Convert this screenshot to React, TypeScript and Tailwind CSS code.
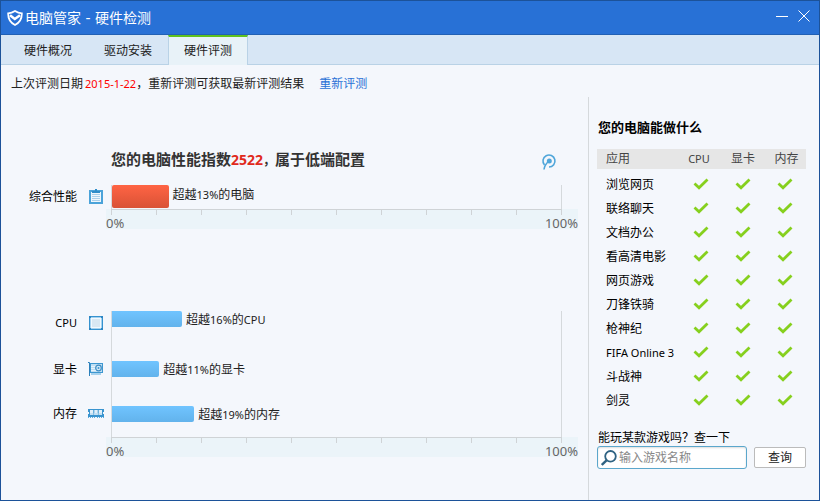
import React from "react";

type Metric = {
  name: string;
  icon: React.ReactNode;
  share: number;
  before: string;
  percent: string;
  after: string;
  latin?: string;
  labelClass: string;
  barClass: string;
};

const games = [
  "浏览网页",
  "联络聊天",
  "文档办公",
  "看高清电影",
  "网页游戏",
  "刀锋铁骑",
  "枪神纪",
  "FIFA Online 3",
  "斗战神",
  "剑灵",
];

const tabs = ["硬件概况", "驱动安装", "硬件评测"];

function ShieldLogo() {
  return (
    <svg viewBox="0 0 16 16" className="w-4 h-4" fill="none" stroke="#fff">
      <path d="M8 1C6 2.300 3.600 3.200 1.200 3.400C1 8.500 3 12.600 8 15C13 12.600 15 8.500 14.800 3.400C12.400 3.200 10 2.300 8 1Z" strokeWidth="1.800" />
      <path d="M3 5.300L7.800 9L13 5.300" strokeWidth="2.600" />
    </svg>
  );
}

function ClipboardIcon() {
  return (
    <svg viewBox="0 0 16 16" className="w-4 h-4" fill="none">
      <rect x="1" y="2" width="14" height="14" fill="#4ba3d9" />
      <rect x="3" y="4" width="10" height="10" fill="#eef6fc" />
      <path d="M4 3h8v2H4z" fill="#2f8dc9" />
      <path d="M7 1h2v2H7z" fill="#2f8dc9" />
      <path d="M4 6.500h8M4 8.500h8M4 10.500h8M4 12.500h8" stroke="#a9d0ea" />
    </svg>
  );
}

function ChipIcon() {
  return (
    <svg viewBox="0 0 16 16" className="w-4 h-4" fill="none">
      <rect x="1.500" y="1.500" width="13" height="13" fill="#a5d2f0" stroke="#3592cf" />
      <rect x="3.500" y="3.500" width="9" height="9" fill="#d9e8f3" stroke="#f2f9fe" />
      <path d="M1 1h2v2H1zM13 1h2v2h-2zM1 13h2v2H1zM13 13h2v2h-2z" fill="#2c86c4" />
    </svg>
  );
}

function GraphicsIcon() {
  return (
    <svg viewBox="0 0 16 16" className="w-4 h-4" fill="none">
      <path d="M0 1.500h1.500V15" stroke="#2c80bb" />
      <rect x="2.500" y="2.500" width="12" height="9" fill="#c0def2" stroke="#3d97d0" />
      <path d="M3 5.500h5M3 7.500h4M3 9.500h5" stroke="#e6f3fb" />
      <path d="M2 11.500h13" stroke="#3d97d0" />
      <circle cx="10.500" cy="7" r="2.800" fill="#d3e9f7" stroke="#3d8cc3" strokeWidth="1.200" />
      <circle cx="10.500" cy="7" r="1" fill="#3d97d0" />
      <path d="M3 13h10" stroke="#8cc4e8" strokeWidth="1.500" />
    </svg>
  );
}

function MemoryIcon() {
  return (
    <svg viewBox="0 0 16 16" className="w-4 h-4" fill="none">
      <path d="M0 4h16v3h-1v2h1v3H0V9h1V7H0z" fill="#3994cf" />
      <path d="M2 5h3.300v5H2zM6.300 5h3.400v5H6.300zM10.700 5H14v5h-3.300z" fill="#e1f0fa" />
      <path d="M2 8h3.300v2H2zM6.300 8h3.400v2H6.300zM10.700 8H14v2h-3.300z" fill="#c4e0f3" />
      <path d="M0 12.500h7M9 12.500h7" stroke="#5eacdd" strokeDasharray="1 1" />
    </svg>
  );
}

function SpeedIcon() {
  return (
    <svg viewBox="0 0 16 18" className="w-4 h-[18px]" fill="none" stroke="#4fa6da">
      <path d="M3.500 12A6 6 0 1 1 8 14" strokeWidth="1.600" />
      <circle cx="8.300" cy="8" r="2.500" fill="#4fa6da" stroke="none" />
      <path d="M8 8C5.500 10 3.500 12.500 3 16.500" strokeWidth="1.600" />
    </svg>
  );
}

function Check() {
  return (
    <svg viewBox="0 0 16 12" className="mx-auto w-4 h-3" fill="none" role="img" aria-label="支持">
      <path d="M1.500 5.500L6 9.700L14.500 1.500" stroke="#86d01e" strokeWidth="2.800" />
    </svg>
  );
}

function Chart({ metrics, overall }: { metrics: Metric[]; overall?: boolean }) {
  return (
    <div>
      <div className="flex">
        <div className="w-[110px] pr-[7px]">
          {metrics.map((m) => (
            <div key={m.name} className={`flex h-4 items-center justify-end gap-[11px] ${m.labelClass}`}>
              <span className={m.name === "CPU" ? "text-[11px]" : "pt-px"}>{m.name}</span>
              {m.icon}
            </div>
          ))}
        </div>
        <div className={`mr-[26px] flex-1 border-x border-[#d5d9dc] ${overall ? "pb-px" : "pb-[15px]"}`}>
          {metrics.map((m) => (
            <div key={m.name} className={`flex items-center gap-1 ${overall ? "h-[23px]" : "h-4"} ${m.barClass}`}>
              <div
                className={`h-full rounded-r-[2px] bg-linear-to-b ${
                  overall ? "rounded-l-[2px] from-[#ff6444] to-[#d95236]" : "from-[#70c4ff] to-[#62b3ec]"
                }`}
                style={{ width: `${m.share}%` }}
              />
              <span className={`text-[#222] ${overall ? "pb-1" : "pt-[2px]"}`}>
                {m.before}
                <span className="text-[11px]">{m.percent}</span>
                {m.after}
                {m.latin && <span className="text-[11px]">{m.latin}</span>}
              </span>
            </div>
          ))}
        </div>
      </div>

      {/* Scale */}
      <div className="ml-[105px] mr-[10px] h-5 bg-[#ebf4f9]">
        <div className="ml-[5px] mr-4 flex h-[6px] justify-between border-t border-[#cfd3d6]">
          {Array.from({ length: 11 }, (_, i) => (
            <span key={i} className="w-px bg-[#cfd3d6]" />
          ))}
        </div>
        <div className="flex justify-between text-[13px] leading-4 text-[#666]">
          <span>0%</span>
          <span>100%</span>
        </div>
      </div>
    </div>
  );
}

const overallMetrics: Metric[] = [
  { name: "综合性能", icon: <ClipboardIcon />, share: 12.6, before: "超越", percent: "13%", after: "的电脑", labelClass: "mt-[3px]", barClass: "" },
];

const partMetrics: Metric[] = [
  { name: "CPU", icon: <ChipIcon />, share: 15.6, before: "超越", percent: "16%", after: "的", latin: "CPU", labelClass: "mt-1", barClass: "" },
  { name: "显卡", icon: <GraphicsIcon />, share: 10.5, before: "超越", percent: "11%", after: "的显卡", labelClass: "mt-[30px]", barClass: "mt-[34px]" },
  { name: "内存", icon: <MemoryIcon />, share: 18.3, before: "超越", percent: "19%", after: "的内存", labelClass: "mt-7", barClass: "mt-[29px]" },
];

export default function App() {
  return (
    <div className="flex min-h-screen flex-col border border-[#1c5299] bg-[#f4f7fc] font-['Noto_Sans','Noto_Sans_CJK_SC',sans-serif] text-[12px] leading-4 text-black">
      {/* Title bar */}
      <header className="flex h-[34px] items-center border-b border-[#2160b4] bg-[#2871d6] pl-[6px] pr-[9px]">
        <ShieldLogo />
        <h1 className="ml-[2px] flex-1 font-['DejaVu_Sans','Noto_Sans_CJK_SC',sans-serif] text-[14px] leading-5 text-white">
          电脑管家 - 硬件检测
        </h1>
        <button type="button" aria-label="最小化" className="mr-[10px] pb-1">
          <svg viewBox="0 0 12 12" className="w-3 h-3" stroke="#fff">
            <path d="M0 6.500h12" />
          </svg>
        </button>
        <button type="button" aria-label="关闭" className="pb-1">
          <svg viewBox="0 0 12 12" className="w-3 h-3" stroke="#fff">
            <path d="M.5 .5l11 11M11.500 .5l-11 11" />
          </svg>
        </button>
      </header>

      {/* Tabs */}
      <nav className="flex h-[30px] bg-[#d7e6f5]">
        <div className="w-[7px] border-b border-[#b9d2e6]" />
        {tabs.map((tab) => (
          <button
            key={tab}
            type="button"
            className={`w-20 text-[#222] ${
              tab === "硬件评测"
                ? "border-x border-t-2 border-x-[#b9d2e6] border-t-[#5fc21f] bg-[#e8f2f8]"
                : "border-b border-[#b9d2e6] pt-[2px]"
            }`}
          >
            {tab}
          </button>
        ))}
        <div className="flex-1 border-b border-[#b9d2e6]" />
      </nav>

      <p className="flex h-8 items-center pl-[10px] pt-[5px] text-[#222]">
        上次评测日期
        <span className="ml-[2px] text-[11px] text-[#f00]">2015-1-22</span>
        ，重新评测可获取最新评测结果
        <a href="#retest" className="ml-[15px] text-[#2871d6]">重新评测</a>
      </p>

      <main className="flex flex-1">
        <section className="flex-1 pt-[53px]">
          <div className="mb-[15px] ml-[110px] mr-[31px] flex h-5 items-center justify-between">
            <h2 className="text-[15px] font-bold leading-5 text-[#333]">
              您的电脑性能指数<span className="text-[14px] text-[#e02a1c]">2522</span>
              <span className="text-[12px]">，</span>属于低端配置
            </h2>
            <button type="button" aria-label="性能测试" className="pt-[3px]">
              <SpeedIcon />
            </button>
          </div>
          <Chart metrics={overallMetrics} overall />
          <div className="h-[82px]" />
          <Chart metrics={partMetrics} />
        </section>

        <aside className="w-[231px] border-l border-[#d5d9dc] pl-2 pr-[13px] pt-5">
          <h2 className="mb-3 pl-px text-[13px] font-bold leading-5">您的电脑能做什么</h2>
          <table className="w-full table-fixed">
            <thead>
              <tr className="h-5 bg-[#e6e6e6] text-[#444]">
                <th className="pl-[9px] text-left font-normal">应用</th>
                <th className="w-[42px] pr-1 text-[11px] font-normal">CPU</th>
                <th className="w-[42px] font-normal">显卡</th>
                <th className="w-[42px] pl-[3px] font-normal">内存</th>
              </tr>
            </thead>
            <tbody className="before:block before:h-[3px] before:content-['']">
              {games.map((game) => (
                <tr key={game} className="h-6">
                  <td className={`pl-[9px] pt-[2px] ${game === "FIFA Online 3" ? "text-[11px]" : ""}`}>{game}</td>
                  <td><Check /></td>
                  <td><Check /></td>
                  <td><Check /></td>
                </tr>
              ))}
            </tbody>
          </table>

          <form className="mt-4" onSubmit={(e) => e.preventDefault()}>
            <label htmlFor="game" className="block h-[18px] pl-px pt-[2px]">
              能玩某款游戏吗？查一下
            </label>
            <div className="flex items-center gap-[7px]">
              <div className="flex h-[23px] min-w-0 flex-1 items-center gap-[2px] rounded-[3px] border border-[#5ba7cc] bg-white pl-[3px] shadow-[inset_0_1px_2px_#dddddd]">
                <svg viewBox="0 0 16 16" className="w-4 h-4 shrink-0" fill="none" stroke="#2f6383" strokeWidth="1.800">
                  <circle cx="9.500" cy="6.300" r="5.300" />
                  <path d="M5.500 10.300L.8 15" strokeWidth="2.400" />
                </svg>
                <input
                  id="game"
                  type="text"
                  placeholder="输入游戏名称"
                  className="w-full min-w-0 bg-transparent outline-none placeholder:text-[#888]"
                />
              </div>
              <button type="submit" className="h-[21px] w-[52px] rounded-[2px] border border-[#bbb] bg-white text-[#222]">
                查询
              </button>
            </div>
          </form>
        </aside>
      </main>
    </div>
  );
}
